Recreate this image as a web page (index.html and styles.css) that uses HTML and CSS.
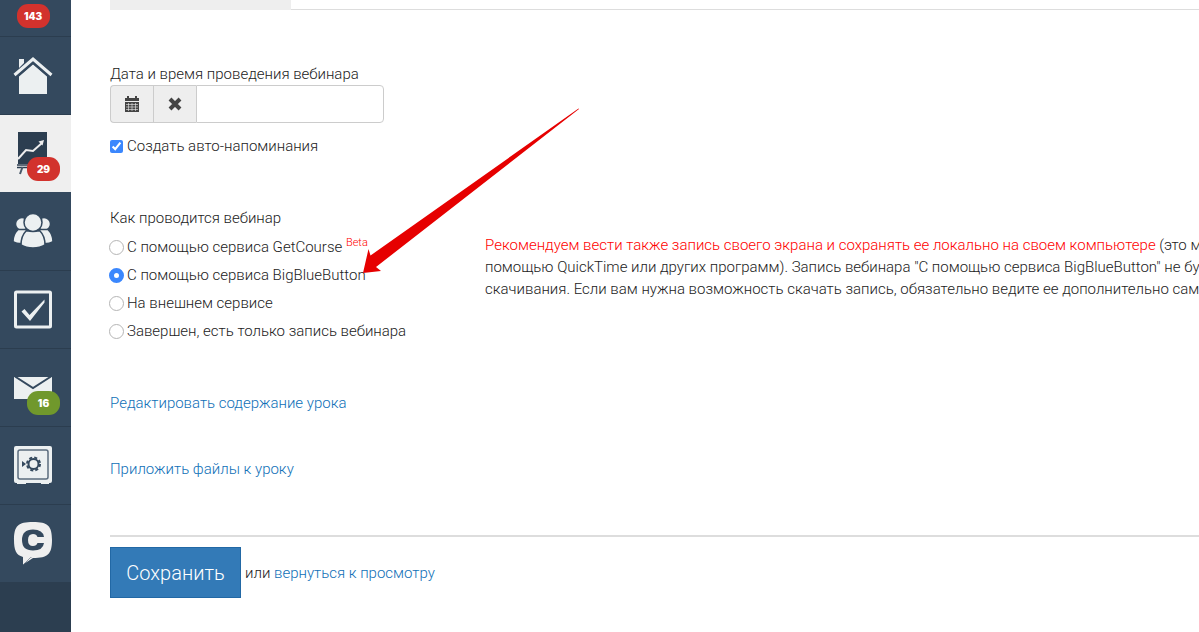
FILE: index.html
```html
<!DOCTYPE html>
<html lang="ru">
<head>
<meta charset="UTF-8" />
<meta name="viewport" content="width=device-width, initial-scale=1" />
<title>Настройки вебинара</title>
<link rel="stylesheet" href="styles.css">
</head>
<body>
<nav class="sidebar">
  <a class="nav-item nav-top" href="#" aria-label="Профиль"><span class="badge-inline">143</span></a>
  <a class="nav-item" href="#" aria-label="Главная">
    <svg width="40" height="40" viewBox="0 0 40 40">
      <path d="M6 3h5v4l-5 5z" fill="#ecf0f1"/>
      <path d="M6 20 20 8l14 12v18H6z" fill="#ecf0f1"/>
      <path d="M1.500 21 20 5 38.500 21" fill="none" stroke="#34495e" stroke-width="5"/>
      <path d="M1.500 19 20 3 38.500 19" fill="none" stroke="#ecf0f1" stroke-width="3"/>
    </svg>
  </a>
  <a class="nav-item active" href="#" aria-label="Обучение">
    <svg width="40" height="44" viewBox="0 0 40 44">
      <path d="M5 0h29v32H5z" fill="#2c3e50"/>
      <path d="M4 33h30M4 35.500h30" stroke="#2c3e50" stroke-width="1.500"/>
      <path d="M9.500 35 7 42M28 35l3 7" stroke="#4a5a6b" stroke-width="2"/>
      <path d="M5 27l8-9 7 1 9-8" fill="none" stroke="#eee" stroke-width="2"/>
      <path d="M25.500 9.500l5.500-1.500-1.500 5.500z" fill="#eee"/>
    </svg>
    <span class="badge">29</span>
  </a>
  <a class="nav-item" href="#" aria-label="Ученики">
    <svg width="40" height="40" viewBox="0 0 40 40">
      <g fill="#ecf0f1" stroke="#34495e" stroke-width="1.500">
        <circle cx="9" cy="12" r="6.500"/>
        <circle cx="31" cy="12" r="6.500"/>
        <path d="M5 17.500h9l-5 14q-6 0-9-2 0-7 5-12z"/>
        <path d="M35 17.500h-9l5 14q6 0 9-2 0-7-5-12z"/>
        <path d="M13 19h14q5 5 5 14-5 3-12 3T8 33q0-9 5-14z"/>
        <circle cx="20" cy="10.500" r="9"/>
      </g>
    </svg>
  </a>
  <a class="nav-item" href="#" aria-label="Задачи">
    <svg width="40" height="40" viewBox="0 0 40 40">
      <rect x="2.500" y="2" width="35" height="35" rx="1" fill="none" stroke="#ecf0f1" stroke-width="3"/>
      <path d="M8.500 21.500l3-2.500 5 6L31.500 9.500v3L17 31z" fill="#ecf0f1"/>
    </svg>
  </a>
  <a class="nav-item" href="#" aria-label="Сообщения">
    <svg width="40" height="40" viewBox="0 0 40 40">
      <path d="M1 9h38v22H1z" fill="#ecf0f1"/>
      <path d="M2 8.500l18 11.500 18-11.500" fill="none" stroke="#34495e" stroke-width="2"/>
    </svg>
    <span class="badge green">16</span>
  </a>
  <a class="nav-item" href="#" aria-label="Продажи">
    <svg width="40" height="40" viewBox="0 0 40 40">
      <path d="M3 0h34q2 0 2 2v33q0 2-2 2h-1v1h-8v-1H13v1H4v-1H3q-2 0-2-2V2q0-2 2-2z" fill="#ecf0f1"/>
      <rect x="5" y="4" width="30" height="29" rx="2" fill="none" stroke="#5b6c7e" stroke-width="1.500"/>
      <circle cx="20.500" cy="18" r="5" fill="none" stroke="#34495e" stroke-width="2"/>
      <circle cx="20.500" cy="18" r="6.500" fill="none" stroke="#34495e" stroke-width="2" stroke-dasharray="3 2.100"/>
      <path d="M9 15l4 3-4 3z" fill="#34495e"/>
    </svg>
  </a>
  <a class="nav-item last" href="#" aria-label="Чаты">
    <svg width="40" height="44" viewBox="0 0 40 44">
      <path d="M20 0c15 0 19 4 19 18s-4 18-19 18l-10 6.500V35C3 33 1 28 1 18 1 4 5 0 20 0z" fill="#efefef"/>
      <path d="M18.500 35.500h-1L11 42" fill="none" stroke="#34495e" stroke-width=".5"/>
      <path d="M31 15h-6.500q-1-3-4.500-3-5 0-5 6t5 6q3.500 0 4.500-3H31q-1 7.500-11 7.500Q9 28.500 9 18T20 7.500Q30 7.500 31 15z" fill="#34495e"/>
    </svg>
  </a>
</nav>

<main class="content">
  <div class="tabs"><div class="tab"></div></div>

  <form class="form">
    <label class="line" for="webinar-date">Дата и время проведения вебинара</label>
    <div class="input-group">
      <button type="button" class="addon" aria-label="Выбрать дату">
        <svg width="16" height="16" viewBox="0 0 16 16">
          <path d="M1 2h2V0h2v2h6V0h2v2h2v3H1z" fill="#444"/>
          <path d="M1 6h14v10H1z" fill="#444"/>
          <path d="M2 8.500h12M2 11h12M2 13.500h12M4.500 7v8M8 7v8M11.500 7v8" stroke="#eee" stroke-width=".6"/>
        </svg>
      </button>
      <button type="button" class="addon" aria-label="Очистить">
        <svg width="16" height="16" viewBox="0 0 16 16">
          <path d="M3 3l10 10M13 3L3 13" stroke="#444" stroke-width="4"/>
        </svg>
      </button>
      <input type="text" id="webinar-date" class="date-input">
    </div>

    <div class="check-row">
      <input type="checkbox" id="reminders" checked>
      <label for="reminders">Создать авто-напоминания</label>
    </div>

    <div class="columns">
      <div class="radios" role="radiogroup" aria-labelledby="how">
        <div class="line" id="how">Как проводится вебинар</div>
        <label class="radio"><input type="radio" name="service"><span>С помощью сервиса GetCourse <sup class="beta">Beta</sup></span></label>
        <label class="radio"><input type="radio" name="service" checked><span>С помощью сервиса BigBlueButton</span></label>
        <label class="radio"><input type="radio" name="service"><span>На внешнем сервисе</span></label>
        <label class="radio"><input type="radio" name="service"><span>Завершен, есть только запись вебинара</span></label>
      </div>
      <p class="note"><span class="red">Рекомендуем вести также запись своего экрана и сохранять ее локально на своем компьютере</span> (это м<br>
      помощью QuickTime или других программ). Запись вебинара "С помощью сервиса BigBlueButton" не бу<br>
      скачивания. Если вам нужна возможность скачать запись, обязательно ведите ее дополнительно сам</p>
    </div>

    <div class="links">
      <a href="#">Редактировать содержание урока</a>
      <a href="#">Приложить файлы к уроку</a>
    </div>

    <div class="actions">
      <button type="button" class="save">Сохранить</button>
      <span>или <a href="#">вернуться к просмотру</a></span>
    </div>
  </form>

  <svg class="arrow" width="220" height="170" viewBox="0 0 220 170">
    <path d="M216.500 0.500 8.500 147.500 6.500 141 1 165l18-2-5-4L217 1z" fill="#e60000"/>
  </svg>
</main>
</body>
</html>
```
FILE: styles.css
```css
* { box-sizing: border-box; }
body {
  margin: 0; min-height: 100vh; display: flex; overflow: hidden;
  background: #fff; color: #222;
  font-family: Roboto, "Open Sans", sans-serif; font-size: 15px; font-weight: 300; line-height: 22px;
}
a { color: #0f70b7; text-decoration: none; }

.sidebar {
  width: 71px; flex-shrink: 0; background: #2c3e50;
}
.nav-item {
  position: relative; display: flex; align-items: center;
  height: 78px; padding-left: 13px;
  background: #34495e; border-bottom: 1px solid #2b3d4f;
}
.nav-item.nav-top { height: 37px; padding: 0 5px 4px 0; justify-content: center; }
.nav-item.active { background: #efefef; border-bottom-color: #34495e; }
.nav-item.last { height: 77px; border-bottom: none; }
.badge, .badge-inline {
  height: 24px; width: 33px; border-radius: 11px;
  background: #d2322d; color: #fff;
  font-family: Inter, sans-serif; font-size: 10px; font-weight: 900; line-height: 24px; text-align: center;
}
.badge { position: absolute; left: 27px; top: 42px; }
.badge.green { background: #70982c; }

.content {
  position: relative; flex: 1; min-width: 0; overflow: hidden;
  padding-left: 39px;
}
.tabs { height: 10px; border-bottom: 1px solid #ddd; }
.tab { width: 181px; height: 10px; background: #eee; }
.form { padding-top: 53px; }
.line { display: block; }

.input-group { display: flex; width: 274px; height: 38px; }
.addon {
  width: 43px; padding: 0; display: flex; align-items: center; justify-content: center;
  background: #eee; border: 1px solid #ccc; border-right: none;
}
.addon:first-child { border-radius: 4px 0 0 4px; }
.date-input {
  flex: 1; min-width: 0; border: 1px solid #ccc; border-radius: 0 4px 4px 0;
  padding: 6px 12px; font: inherit; outline: none;
}
.check-row { display: flex; align-items: center; gap: 4px; margin-top: 12px; }
.check-row input { width: 13px; height: 13px; margin: 0; accent-color: #3b87fd; }

.columns { display: grid; grid-template-columns: 375px 1fr; margin-top: 50px; }
.radios { display: flex; flex-direction: column; gap: 6px; }
.radios .line { margin-bottom: 1px; }
.radio { display: flex; align-items: center; gap: 3px; }
.radio input {
  appearance: none; width: 15px; height: 15px; margin: 0 0 0 -1px;
  border: 1px solid #b5b5b5; border-radius: 50%; background: #fff;
}
.radio input:checked { border: 5px solid #3b87fd; }
.beta { color: #f00; font-size: 11px; line-height: 0; }
.note { margin: 27px 0 0; white-space: nowrap; }
.red { color: #f00; }

.links { display: flex; flex-direction: column; align-items: flex-start; gap: 44px; margin-top: 50px; }
.actions {
  display: flex; align-items: center; gap: 4px;
  margin-top: 55px; padding-top: 10px; border-top: 2px solid #ddd;
}
.save {
  height: 51px; width: 131px; padding: 0; background: #337ab7; border: 1px solid #2268a5;
  color: #fff; font-family: inherit; font-size: 20px; font-weight: 300;
}
.arrow { position: absolute; left: 291px; top: 108px; }
```
